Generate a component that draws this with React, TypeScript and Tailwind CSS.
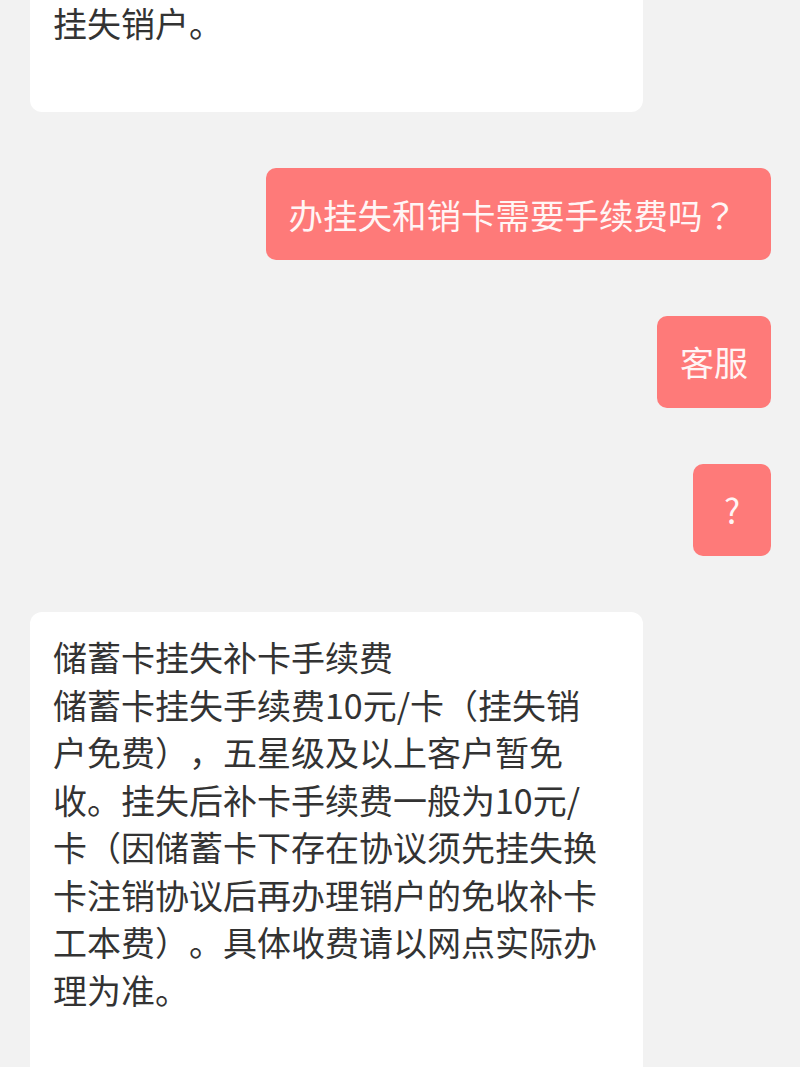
import React from "react";

const font = { fontFamily: '"Noto Sans CJK SC", "Noto Sans", sans-serif' };
const tc = { fontFamily: '"Noto Sans CJK TC", "Noto Sans CJK SC", sans-serif' };

export default function App() {
  const lines = [
    "储蓄卡挂失补卡手续费",
    "储蓄卡挂失手续费10元/卡（挂失销",
    "户免费），五星级及以上客户暂免",
    "收。挂失后补卡手续费一般为10元/",
    "卡（因储蓄卡下存在协议须先挂失换",
    "卡注销协议后再办理销户的免收补卡",
    "工本费）。具体收费请以网点实际办",
    "理为准。",
  ];
  return (
    <div
      className="w-[800px] h-[1067px] overflow-hidden bg-[#f2f2f2] flex flex-col pl-[30px] pr-[29px] [text-spacing-trim:space-all]"
      style={font}
    >
      <div className="w-[613px] bg-white rounded-b-[12px] pl-[23px] pt-0 pb-[66px] text-[34px] leading-[46px] text-[#333333]">
        挂失销户。
      </div>

      <div className="self-end mt-[56px] bg-[#fe7a79] rounded-[10px] pl-[23px] pr-[34px] pt-[22px] pb-[22px] text-[34.5px] leading-[48px] text-[#fff5f5] whitespace-nowrap">
        办挂失和销卡需要手续费吗<span style={tc}>？</span>
      </div>

      <div className="self-end mt-[56px] bg-[#fe7a79] rounded-[10px] px-[23px] py-[22px] text-[34px] leading-[48px] text-[#fff5f5] whitespace-nowrap">
        客服
      </div>

      <div className="self-end mt-[56px] bg-[#fe7a79] rounded-[10px] w-[78px] flex justify-center py-[22px] text-[34px] leading-[48px] text-[#fff5f5]">
        ?
      </div>

      <div className="w-[613px] mt-[56px] bg-white rounded-[12px] pl-[23px] pr-[20px] pt-[21px] pb-[80px] text-[34px] leading-[47.5px] text-[#333333]">
        {lines.map((l, i) => (
          <div key={i} className="whitespace-nowrap">
            {l}
          </div>
        ))}
      </div>
    </div>
  );
}
